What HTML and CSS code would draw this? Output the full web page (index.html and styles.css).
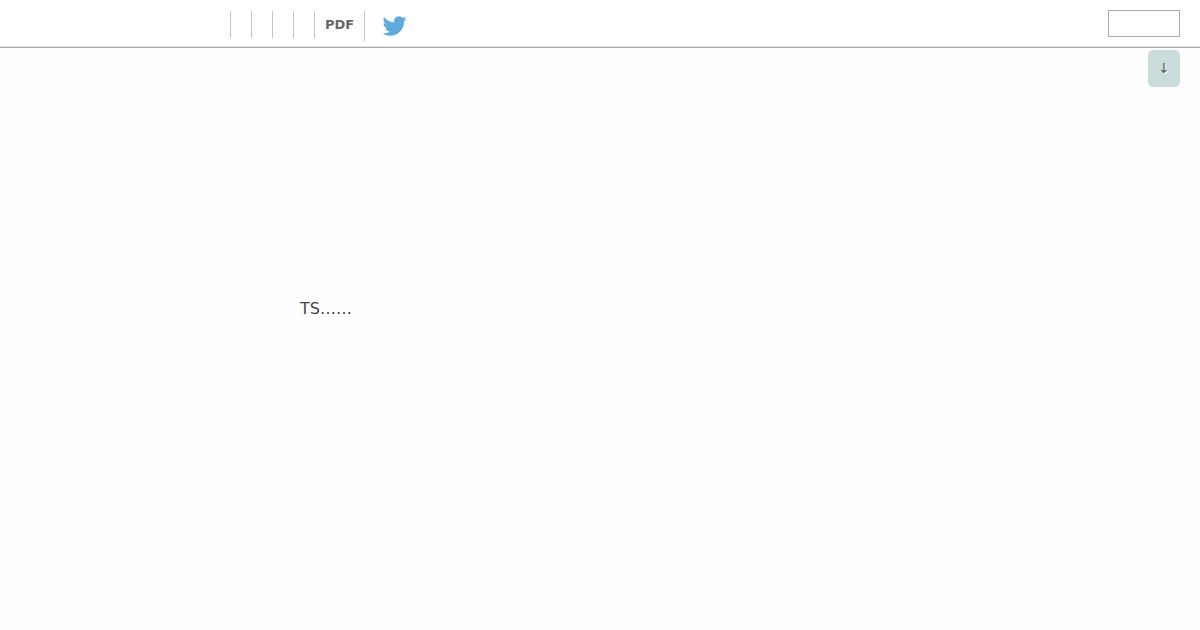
FILE: index.html
```
<!DOCTYPE html>
<html lang="en">
<head>
    <meta charset="UTF-8">
    <meta name="viewport" content="width=device-width, initial-scale=1.0">
    <title>TS</title>
    <link rel="stylesheet" href="styles.css">
</head>
<body>
    <header class="header">
        <ul class="menu">
            <li></li>
            <li></li>
            <li></li>
            <li></li>
            <li><a href="#">PDF</a></li>
            <li class="twitter">
                <a href="#" aria-label="Twitter">
                    <svg class="bird" viewBox="0 0 24 24">
                        <path d="M23.954 4.569a10 10 0 0 1-2.825.775 4.958 4.958 0 0 0 2.163-2.723c-.951.555-2.005.959-3.127 1.184a4.92 4.92 0 0 0-8.384 4.482C7.691 8.094 4.066 6.13 1.64 3.161a4.822 4.822 0 0 0-.666 2.475c0 1.71.87 3.213 2.188 4.096a4.904 4.904 0 0 1-2.228-.616v.061a4.923 4.923 0 0 0 3.946 4.827 4.996 4.996 0 0 1-2.212.085 4.937 4.937 0 0 0 4.604 3.417 9.868 9.868 0 0 1-6.102 2.105c-.39 0-.779-.023-1.17-.067a13.995 13.995 0 0 0 7.557 2.209c9.054 0 13.999-7.496 13.999-13.986 0-.209 0-.42-.015-.63a9.936 9.936 0 0 0 2.46-2.548z"/>
                    </svg>
                </a>
            </li>
        </ul>
        <input class="search" type="text" aria-label="Search">
    </header>

    <a class="scroll-down" href="#bottom">↓</a>

    <main class="content" id="bottom">TS……</main>
</body>
</html>
```

FILE: styles.css
```
* {
    box-sizing: border-box;
}
body {
    margin: 0;
    background-color: #fefefe;
    color: #444;
    font-family: "DejaVu Sans", sans-serif;
    font-size: 16px;
}
a {
    color: #666;
    text-decoration: none;
}
.header {
    display: flex;
    justify-content: space-between;
    align-items: flex-start;
    height: 48px;
    padding: 10px 20px 0 230px;
    background-color: #fff;
    border-bottom: 1px solid #aaa;
    box-shadow: inset 0 -1px 0 #e4e4e4;
}
.menu {
    display: flex;
    align-items: flex-start;
    margin: 1px 0 0;
    padding: 0;
    list-style: none;
    font-size: 13px;
    font-weight: bold;
    line-height: 27px;
}
.menu li {
    height: 27px;
    padding: 0 10px;
    border-left: 1px solid #c4c4c4;
}
.menu .twitter {
    height: 30px;
    padding: 3px 17px 0;
}
.bird {
    display: block;
    width: 25px;
    height: 24px;
    fill: #5ea9dd;
}
.search {
    width: 72px;
    height: 27px;
    border: 1px solid #aaa;
    background-color: #fff;
}
.scroll-down {
    position: absolute;
    top: 50px;
    right: 20px;
    width: 32px;
    height: 37px;
    border-radius: 5px;
    background-color: #cadcdc;
    color: #555;
    font-size: 14px;
    line-height: 37px;
    text-align: center;
    text-shadow: 1px 1px 0 #fff;
}
.content {
    margin: 251px 0 0 300px;
    line-height: 19px;
}
```
